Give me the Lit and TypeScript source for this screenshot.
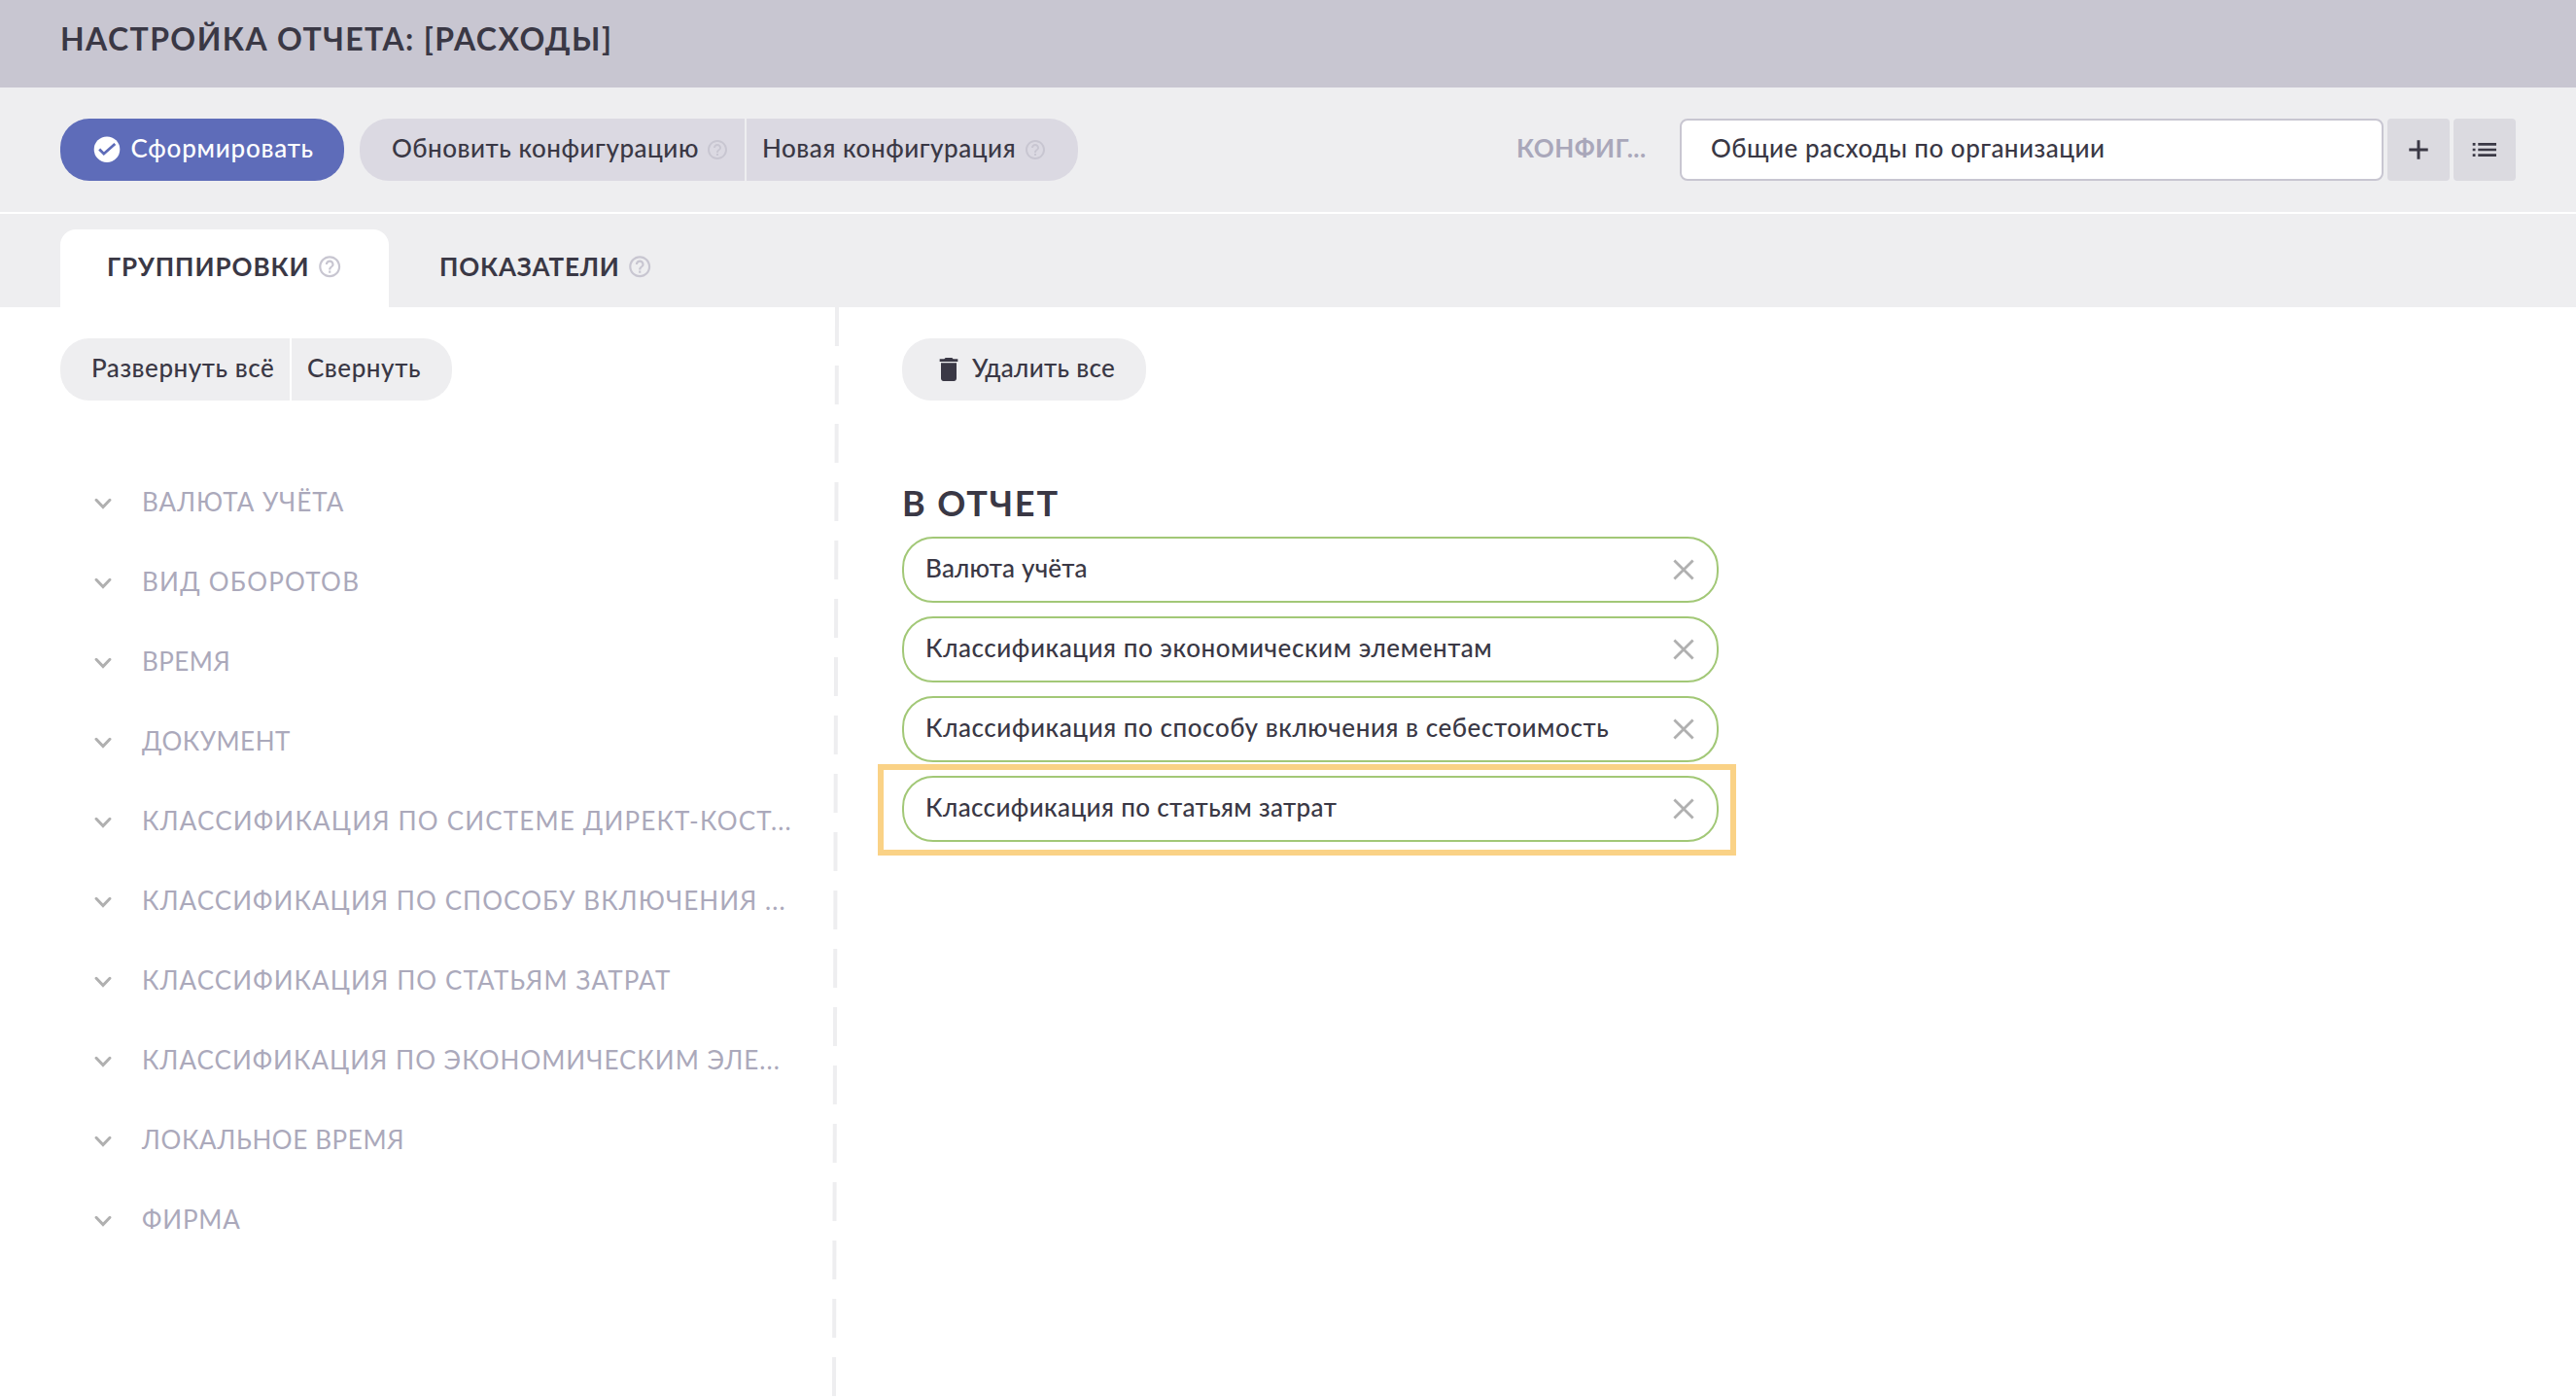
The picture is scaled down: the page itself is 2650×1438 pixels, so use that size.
import { LitElement, html, css, svg } from "lit";
import { customElement, property } from "lit/decorators.js";

const SHAPES: Record<string, unknown> = {
  check: svg`<circle cx="16" cy="15.7" r="13.3" fill="#fff"/><path d="M8.2 15.6 12.8 20.2 24.3 10" fill="none" stroke="#5e6cb9" stroke-width="2.8"/>`,
  help: svg`<path transform="scale(1.33333)" fill="currentColor" d="M11 18h2v-2h-2v2zm1-16C6.48 2 2 6.48 2 12s4.48 10 10 10 10-4.48 10-10S17.52 2 12 2zm0 18c-4.41 0-8-3.59-8-8s3.59-8 8-8 8 3.59 8 8-3.59 8-8 8zm0-14c-2.21 0-4 1.79-4 4h2c0-1.1.9-2 2-2s2 .9 2 2c0 2-3 1.75-3 5h2c0-2.25 3-2.5 3-5 0-2.21-1.79-4-4-4z"/>`,
  plus: svg`<path d="M16 6.3V25.7M6.3 16H25.7" fill="none" stroke="currentColor" stroke-width="3"/>`,
  list: svg`<path d="M3.7 10.4h2.8M3.7 16h2.8M3.7 21.6h2.8M9.3 10.4H28M9.3 16H28M9.3 21.6H28" fill="none" stroke="currentColor" stroke-width="2.7"/>`,
  trash: svg`<path transform="scale(1.33333)" fill="currentColor" d="M6 19c0 1.1.9 2 2 2h8c1.1 0 2-.9 2-2V7H6v12zM19 4h-3.5l-1-1h-5l-1 1H5v2h14V4z"/>`,
  chevron: svg`<path d="M9 12.3 16 19.6 23 12.3" fill="none" stroke="currentColor" stroke-width="3" stroke-linecap="round"/>`,
  cross: svg`<path d="M6.4 6.4 25.6 25.6M25.6 6.4 6.4 25.6" fill="none" stroke="currentColor" stroke-width="2.8"/>`,
};

@customElement("ui-icon")
class UiIcon extends LitElement {
  @property() name = "help";
  static styles = css`
    :host { display: block; flex: none; width: 32px; height: 32px; }
    .glyph { display: block; width: 100%; height: 100%; }
  `;
  render() {
    return html`<svg class="glyph" viewBox="0 0 32 32">${SHAPES[this.name]}</svg>`;
  }
}

interface Entry { label: string; spacing: number; }

const GROUPS: Entry[] = [
  { label: "ВАЛЮТА УЧЁТА", spacing: 0.93 },
  { label: "ВИД ОБОРОТОВ", spacing: 1.25 },
  { label: "ВРЕМЯ", spacing: 0.45 },
  { label: "ДОКУМЕНТ", spacing: 0.5 },
  { label: "КЛАССИФИКАЦИЯ ПО СИСТЕМЕ ДИРЕКТ-КОСТ...", spacing: 1.18 },
  { label: "КЛАССИФИКАЦИЯ ПО СПОСОБУ ВКЛЮЧЕНИЯ ...", spacing: 1.06 },
  { label: "КЛАССИФИКАЦИЯ ПО СТАТЬЯМ ЗАТРАТ", spacing: 1.08 },
  { label: "КЛАССИФИКАЦИЯ ПО ЭКОНОМИЧЕСКИМ ЭЛЕ...", spacing: 1 },
  { label: "ЛОКАЛЬНОЕ ВРЕМЯ", spacing: 0.62 },
  { label: "ФИРМА", spacing: 0.85 },
];

const SELECTED: Entry[] = [
  { label: "Валюта учёта", spacing: 0.2 },
  { label: "Классификация по экономическим элементам", spacing: 0.55 },
  { label: "Классификация по способу включения в себестоимость", spacing: 0.56 },
  { label: "Классификация по статьям затрат", spacing: 0.37 },
];

@customElement("app-root")
class AppRoot extends LitElement {
  static styles = css`
    :host {
      display: flex; flex-direction: column; width: 100%; height: 1438px; overflow: hidden;
      background: #fff; color: #3a3845;
      font: 500 26px/32px Lato, "Noto Sans", sans-serif; letter-spacing: 0.57px; white-space: nowrap;
    }
    * { box-sizing: border-box; }
    .header { flex: none; height: 90px; padding-left: 62px; background: #c8c6d1; }
    .title { margin: 0; font-size: 32px; font-weight: 700; line-height: 79px; letter-spacing: 1.41px; }
    .toolbar { flex: none; display: flex; align-items: center; height: 130px; padding: 0 62px; background: #eeeef0; border-bottom: 2px solid #fff; }
    .btn { display: flex; align-items: center; height: 64px; background: #dbd9e2; }
    .txt { margin-bottom: 4px; }
    .first { border-radius: 30px 0 0 30px; }
    .last { border-radius: 0 30px 30px 0; margin-left: 2px; }
    .primary { width: 292px; padding-left: 32px; border-radius: 30px; background: #5e6cb9; color: #fff; gap: 8.5px; letter-spacing: 0.77px; margin-right: 16px; }
    .update { width: 396px; padding: 0 16px 0 33px; justify-content: space-between; letter-spacing: 0.52px; }
    .create { width: 341px; padding: 0 32px 0 16px; justify-content: space-between; letter-spacing: 0.54px; }
    .help { width: 24px; height: 24px; color: #c8c6d1; }
    .config { display: flex; align-items: center; gap: 4px; margin-left: auto; }
    .caption { width: 164px; font-weight: 700; color: #a9a7ba; letter-spacing: 0.45px; }
    .field { display: flex; align-items: center; width: 724px; height: 64px; padding-left: 30px; border: 2px solid #c8c6d1; border-radius: 8px; background: #fff; letter-spacing: 0.49px; }
    .square { display: flex; align-items: center; justify-content: center; width: 64px; height: 64px; border-radius: 4px; background: #dbdae0; }
    .tabs { flex: none; display: flex; align-items: flex-end; height: 96px; padding-left: 62px; background: #eeeef0; }
    .tab { display: flex; align-items: center; height: 80px; font-weight: 700; letter-spacing: 0.95px; }
    .active { width: 338px; padding: 0 48px 0 48px; justify-content: space-between; border-radius: 16px 16px 0 0; background: #fff; }
    .idle { padding-left: 52px; gap: 7px; letter-spacing: 0.8px; }
    .tab .txt { margin-bottom: 5px; }
    .tab .help { width: 26.4px; height: 26.4px; margin-bottom: 4px; }
    .body { flex: 1; display: flex; min-height: 0; }
    .left { width: 854px; padding: 32px 0 0 62px; }
    .row { display: flex; }
    .soft { background: #eeeef0; }
    .expand { width: 236px; padding-left: 32px; letter-spacing: 0.54px; }
    .collapse { width: 165px; padding-left: 16px; }
    .groups { margin-top: 63px; }
    .group { display: flex; align-items: center; height: 82px; padding-left: 28px; gap: 24px; font-weight: 400; color: #aba9bb; }
    .chevron { color: #b0b0b0; margin-top: 4px; }
    .divider { flex: none; width: 12px; height: 1122px; }
    .right { padding: 32px 0 0 62px; }
    .clear { width: 251px; padding-left: 32px; gap: 8px; border-radius: 30px; letter-spacing: 0.32px; }
    .heading { margin: 85px 0 15px; font-size: 36px; font-weight: 700; line-height: 40px; letter-spacing: 1.85px; }
    .pills { display: flex; flex-direction: column; gap: 14px; }
    .pill { position: relative; display: flex; align-items: center; justify-content: space-between; width: 840px; height: 68px; padding: 0 18px 0 22px; border: 2px solid #a2c877; border-radius: 32px; }
    .cross { color: #b0b0b0; }
    .marker { position: absolute; left: -27px; top: -14.3px; width: 883px; height: 94.5px; border: 6px solid #fad286; }
  `;

  render() {
    return html`
      <div class="header"><h1 class="title">НАСТРОЙКА ОТЧЕТА: [РАСХОДЫ]</h1></div>
      <div class="toolbar">
        <div class="btn primary"><ui-icon name="check"></ui-icon><span class="txt">Сформировать</span></div>
        <div class="btn first update"><span class="txt">Обновить конфигурацию</span><ui-icon class="help" name="help"></ui-icon></div>
        <div class="btn last create"><span class="txt">Новая конфигурация</span><ui-icon class="help" name="help"></ui-icon></div>
        <div class="config">
          <span class="caption txt">КОНФИГ...</span>
          <div class="field"><span class="txt">Общие расходы по организации</span></div>
          <div class="square"><ui-icon name="plus"></ui-icon></div>
          <div class="square"><ui-icon name="list"></ui-icon></div>
        </div>
      </div>
      <div class="tabs">
        <div class="tab active"><span class="txt">ГРУППИРОВКИ</span><ui-icon class="help" name="help"></ui-icon></div>
        <div class="tab idle"><span class="txt">ПОКАЗАТЕЛИ</span><ui-icon class="help" name="help"></ui-icon></div>
      </div>
      <div class="body">
        <div class="left">
          <div class="row">
            <div class="btn soft first expand"><span class="txt">Развернуть всё</span></div>
            <div class="btn soft last collapse"><span class="txt">Свернуть</span></div>
          </div>
          <div class="groups">
            ${GROUPS.map((g) => html`<div class="group"><ui-icon class="chevron" name="chevron"></ui-icon><span style="letter-spacing:${g.spacing}px">${g.label}</span></div>`)}
          </div>
        </div>
        <svg class="divider" viewBox="0 0 12 1122"><path d="M7 0 4 1122" stroke="#eeeef0" stroke-width="4" stroke-dasharray="40 20" fill="none"/></svg>
        <div class="right">
          <div class="row"><div class="btn soft clear"><ui-icon name="trash"></ui-icon><span class="txt">Удалить все</span></div></div>
          <h2 class="heading">В ОТЧЕТ</h2>
          <div class="pills">
            ${SELECTED.map((s, i) => html`<div class="pill">
              <span class="txt" style="letter-spacing:${s.spacing}px">${s.label}</span>
              <ui-icon class="cross" name="cross"></ui-icon>
              ${i === SELECTED.length - 1 ? html`<div class="marker"></div>` : null}
            </div>`)}
          </div>
        </div>
      </div>`;
  }
}
